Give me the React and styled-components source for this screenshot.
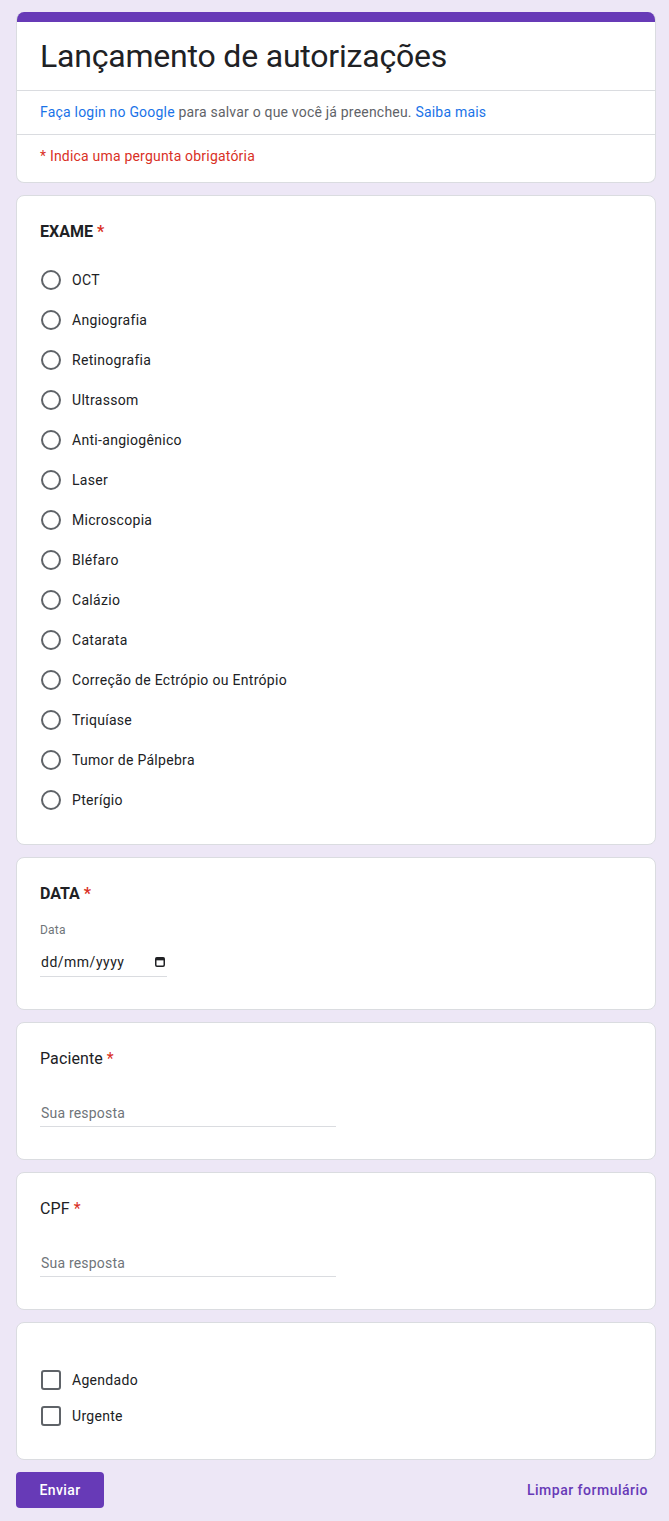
import React from 'react';
import styled, { createGlobalStyle } from 'styled-components';

const GlobalStyle = createGlobalStyle`
	html, body {
		margin: 0;
		padding: 0;
		background: #ede7f6;
	}
	* {
		box-sizing: border-box;
	}
	body {
		font-family: Roboto, 'Noto Sans', Arial, sans-serif;
		color: #202124;
	}
`;

const Page = styled.div`
	width: 669px;
	padding: 12px 13px 14px 16px;
	display: flex;
	flex-direction: column;
	gap: 12px;
`;

const Card = styled.div`
	background: #fff;
	border: 1px solid #dadce0;
	border-radius: 8px;
	padding: ${props => props.$pad || '25px 23px 24px'};
	display: flex;
	flex-direction: column;
`;

const HeaderCard = styled.div`
	background: #fff;
	border: 1px solid #dadce0;
	border-top: none;
	border-radius: 8px;
	overflow: hidden;
	display: flex;
	flex-direction: column;

	&::before {
		content: '';
		display: block;
		height: 10px;
		background: #673ab7;
	}
`;

const HeaderSection = styled.div`
	padding: ${props => props.$pad};
	border-top: ${props => (props.$divided ? '1px solid #dadce0' : 'none')};
	font-size: 14px;
	line-height: 20px;
	letter-spacing: 0.2px;
	color: ${props => props.$color || '#5f6368'};
`;

const FormTitle = styled.h1`
	margin: 0;
	font-size: 32px;
	font-weight: 400;
	line-height: 40px;
	letter-spacing: -0.2px;
	color: #202124;
`;

const Link = styled.a`
	color: #1a73e8;
	text-decoration: none;
`;

const QuestionTitle = styled.div`
	font-size: 16px;
	line-height: 22px;
	letter-spacing: ${props => (props.$bold ? '0' : '0.1px')};
	font-weight: ${props => (props.$bold ? 700 : 400)};
	color: #202124;
`;

const Required = styled.span`
	color: #d93025;
	margin-left: 4px;
`;

const OptionList = styled.div`
	display: flex;
	flex-direction: column;
	margin-top: ${props => props.$top || '17px'};
`;

const Option = styled.label`
	display: flex;
	align-items: center;
	height: ${props => props.$h || '40px'};
	gap: 11px;
	font-size: 14px;
	letter-spacing: 0.3px;
	color: #202124;
	cursor: pointer;
`;

const Radio = styled.span`
	width: 20px;
	height: 20px;
	margin-left: 1px;
	border: 2px solid #5f6368;
	border-radius: 50%;
	flex-shrink: 0;
`;

const Checkbox = styled.span`
	width: 20px;
	height: 20px;
	margin-left: 1px;
	border: 2px solid #5f6368;
	border-radius: 3px;
	flex-shrink: 0;
`;

const SmallLabel = styled.div`
	margin-top: 17px;
	font-size: 12px;
	line-height: 16px;
	letter-spacing: 0.2px;
	color: #70757a;
`;

const DateField = styled.div`
	margin-top: 7px;
	width: 127px;
	height: 32px;
	padding: 3px 2px 0 1px;
	display: flex;
	align-items: center;
	justify-content: space-between;
	border-bottom: 1px solid #dadce0;
	font-size: 14px;
	letter-spacing: 0.5px;
	color: #202124;
`;

const TextInput = styled.input`
	margin-top: 25px;
	width: 296px;
	height: 32px;
	border: none;
	border-bottom: 1px solid #dadce0;
	padding: 4px 0 0 1px;
	font-family: Roboto, Arial, sans-serif;
	font-size: 14px;
	letter-spacing: 0.2px;
	color: #202124;
	outline: none;
	background: transparent;

	&::placeholder {
		color: #70757a;
	}
`;

const Footer = styled.div`
	display: flex;
	align-items: center;
	justify-content: space-between;
`;

const SubmitButton = styled.button`
	width: 88px;
	height: 36px;
	border: none;
	border-radius: 4px;
	background: #673ab7;
	color: #fff;
	font-family: Roboto, Arial, sans-serif;
	font-size: 14px;
	font-weight: 500;
	letter-spacing: 0.4px;
`;

const ClearButton = styled.button`
	border: none;
	background: none;
	padding: 8px 8px;
	color: #673ab7;
	font-family: Roboto, Arial, sans-serif;
	font-size: 14px;
	font-weight: 500;
	letter-spacing: 0.5px;
`;

const CalendarIcon = () => (
	<svg width="10" height="10" viewBox="0 0 10 10">
		<rect x="0.75" y="0.75" width="8.5" height="8.5" rx="1.2" fill="none" stroke="#202124" strokeWidth="1.5" />
		<rect x="0.75" y="0.75" width="8.5" height="2.6" fill="#202124" />
	</svg>
);

const exams = [
	'OCT',
	'Angiografia',
	'Retinografia',
	'Ultrassom',
	'Anti-angiogênico',
	'Laser',
	'Microscopia',
	'Bléfaro',
	'Calázio',
	'Catarata',
	'Correção de Ectrópio ou Entrópio',
	'Triquíase',
	'Tumor de Pálpebra',
	'Pterígio',
];

const App = () => {
	return (
		<>
			<GlobalStyle />
			<Page>
				<HeaderCard>
					<HeaderSection $pad="14px 23px 14px">
						<FormTitle>Lançamento de autorizações</FormTitle>
					</HeaderSection>
					<HeaderSection $pad="11px 23px 12px" $divided>
						<Link href="#">Faça login no Google</Link> para salvar o que você já preencheu.{' '}
						<Link href="#">Saiba mais</Link>
					</HeaderSection>
					<HeaderSection $pad="11px 23px 16px" $divided $color="#d93025">
						* Indica uma pergunta obrigatória
					</HeaderSection>
				</HeaderCard>

				<Card>
					<QuestionTitle $bold>
						EXAME<Required>*</Required>
					</QuestionTitle>
					<OptionList>
						{exams.map(exam => (
							<Option key={exam}>
								<Radio />
								{exam}
							</Option>
						))}
					</OptionList>
				</Card>

				<Card $pad="25px 23px 32px">
					<QuestionTitle $bold>
						DATA<Required>*</Required>
					</QuestionTitle>
					<SmallLabel>Data</SmallLabel>
					<DateField>
						<span>dd/mm/yyyy</span>
						<CalendarIcon />
					</DateField>
				</Card>

				<Card $pad="25px 23px 32px">
					<QuestionTitle>
						Paciente<Required>*</Required>
					</QuestionTitle>
					<TextInput placeholder="Sua resposta" />
				</Card>

				<Card $pad="25px 23px 32px">
					<QuestionTitle>
						CPF<Required>*</Required>
					</QuestionTitle>
					<TextInput placeholder="Sua resposta" />
				</Card>

				<Card $pad="39px 23px 25px">
					<OptionList $top="0">
						<Option $h="36px">
							<Checkbox />
							Agendado
						</Option>
						<Option $h="36px">
							<Checkbox />
							Urgente
						</Option>
					</OptionList>
				</Card>

				<Footer>
					<SubmitButton>Enviar</SubmitButton>
					<ClearButton>Limpar formulário</ClearButton>
				</Footer>
			</Page>
		</>
	);
};

export default App;
